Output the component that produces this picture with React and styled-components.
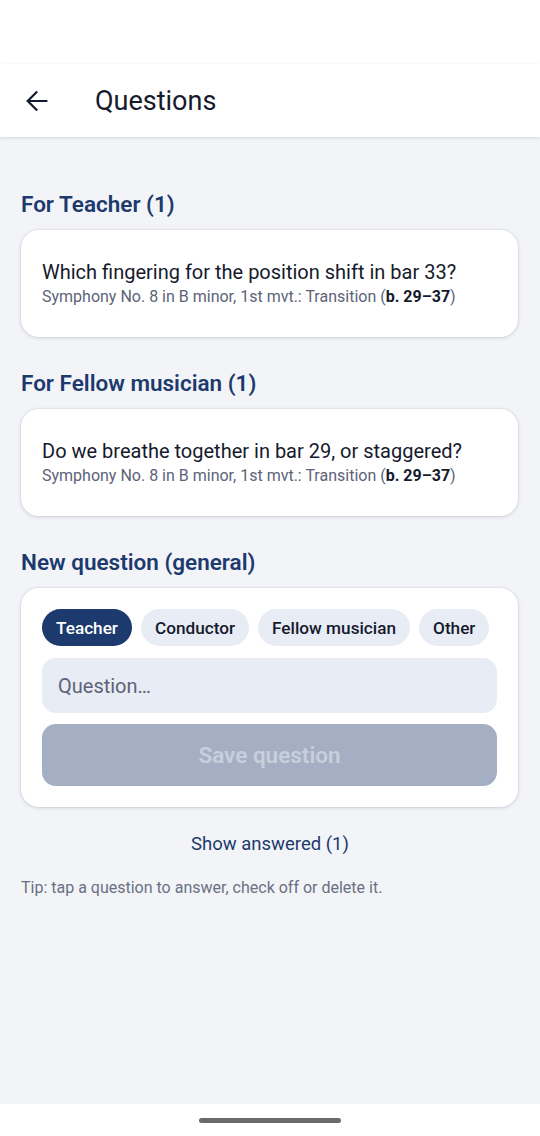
import styled, { createGlobalStyle } from "styled-components";

const GlobalStyle = createGlobalStyle`
  html, body {
    margin: 0;
    padding: 0;
    background: #f3f4f8;
    font-family: Roboto, "Noto Sans", sans-serif;
  }
  * { box-sizing: border-box; }
`;

const Screen = styled.div`
  width: 540px;
  height: 1136px;
  display: flex;
  flex-direction: column;
  background: #f3f4f8;
  overflow: hidden;
`;

const StatusBar = styled.div`
  height: 64px;
  background: #fff;
`;

const AppBar = styled.header`
  height: 73px;
  background: #fff;
  display: flex;
  align-items: center;
  padding: 0 0 0 21px;
  box-shadow: 0 1px 3px rgba(0, 0, 0, 0.12);
  position: relative;
  z-index: 1;
`;

const BackButton = styled.button`
  width: 32px;
  height: 32px;
  padding: 0;
  border: none;
  background: none;
  display: flex;
  align-items: center;
  justify-content: center;
  margin-right: 42px;
`;

const Title = styled.h1`
  margin: 0;
  font-size: 27px;
  font-weight: 400;
  color: #151a2c;
`;

const Content = styled.main`
  flex: 1;
  padding: 54px 21px 0 21px;
  display: flex;
  flex-direction: column;
`;

const SectionTitle = styled.h2`
  margin: 0 0 13px 0;
  font-size: 22.5px;
  font-weight: 600;
  color: #1c3a6e;
  line-height: 26px;
`;

const Card = styled.div`
  background: #fff;
  border-radius: 18px;
  box-shadow: 0 1px 4px rgba(20, 30, 60, 0.14), 0 0 0 1px rgba(20, 30, 60, 0.04);
  padding: ${(p) => p.$pad || "29px 21px 30px 21px"};
  margin: 0 1px 33px 0;
`;

const QuestionText = styled.div`
  font-size: 20px;
  color: #151a2c;
  line-height: 26px;
`;

const Meta = styled.div`
  font-size: 16px;
  color: #5c6378;
  line-height: 20px;
  margin-top: 2px;
  b {
    color: #151a2c;
    font-weight: 700;
  }
`;

const ChipRow = styled.div`
  display: flex;
  gap: 9px;
  margin-bottom: 12px;
`;

const Chip = styled.button`
  height: 37px;
  padding: 0 14px;
  border-radius: 19px;
  border: none;
  font-family: inherit;
  font-size: 17.2px;
  font-weight: 500;
  background: ${(p) => (p.$active ? "#1c3a6e" : "#e8ecf5")};
  color: ${(p) => (p.$active ? "#fff" : "#151a2c")};
`;

const Input = styled.input`
  width: 100%;
  height: 55px;
  border: none;
  border-radius: 14px;
  background: #e8ecf5;
  padding: 0 16px;
  font-family: inherit;
  font-size: 20px;
  color: #151a2c;
  outline: none;
  &::placeholder {
    color: #5c6378;
  }
`;

const SaveButton = styled.button`
  width: 100%;
  height: 62px;
  margin-top: 11px;
  border: none;
  border-radius: 14px;
  background: #a4afc3;
  color: #c8cfdc;
  font-family: inherit;
  font-size: 22.5px;
  font-weight: 600;
`;

const LinkButton = styled.button`
  align-self: center;
  border: none;
  background: none;
  font-family: inherit;
  font-size: 18.5px;
  color: #1c3a6e;
  margin-top: -8px;
  padding: 0;
  height: 24px;
`;

const Tip = styled.p`
  margin: 22px 0 0 0;
  font-size: 16px;
  line-height: 19px;
  color: #6a7083;
`;

const NavBar = styled.div`
  height: 32px;
  background: #fff;
  display: flex;
  justify-content: center;
  padding-top: 14px;
`;

const Handle = styled.div`
  width: 142px;
  height: 5px;
  border-radius: 3px;
  background: #6b6b6b;
`;

const questions = [
  { group: "For Teacher (1)", text: "Which fingering for the position shift in bar 33?" },
  { group: "For Fellow musician (1)", text: "Do we breathe together in bar 29, or staggered?" },
];

const chips = ["Teacher", "Conductor", "Fellow musician", "Other"];

export default function App() {
  return (
    <>
      <GlobalStyle />
      <Screen>
        <StatusBar />
        <AppBar>
          <BackButton aria-label="Back">
            <svg width="28" height="28" viewBox="0 0 24 24" fill="none" stroke="#151a2c" strokeWidth="1.9" strokeLinecap="square">
              <path d="M20 12H4.5M11.5 4.5L4 12l7.5 7.5" />
            </svg>
          </BackButton>
          <Title>Questions</Title>
        </AppBar>
        <Content>
          {questions.map((q) => (
            <div key={q.group}>
              <SectionTitle>{q.group}</SectionTitle>
              <Card>
                <QuestionText>{q.text}</QuestionText>
                <Meta>
                  Symphony No. 8 in B minor, 1st mvt.: Transition (<b>b. 29–37</b>)
                </Meta>
              </Card>
            </div>
          ))}
          <SectionTitle>New question (general)</SectionTitle>
          <Card $pad="21px 21px 21px 21px">
            <ChipRow>
              {chips.map((c, i) => (
                <Chip key={c} $active={i === 0}>{c}</Chip>
              ))}
            </ChipRow>
            <Input placeholder="Question…" />
            <SaveButton disabled>Save question</SaveButton>
          </Card>
          <LinkButton>Show answered (1)</LinkButton>
          <Tip>Tip: tap a question to answer, check off or delete it.</Tip>
        </Content>
        <NavBar>
          <Handle />
        </NavBar>
      </Screen>
    </>
  );
}
